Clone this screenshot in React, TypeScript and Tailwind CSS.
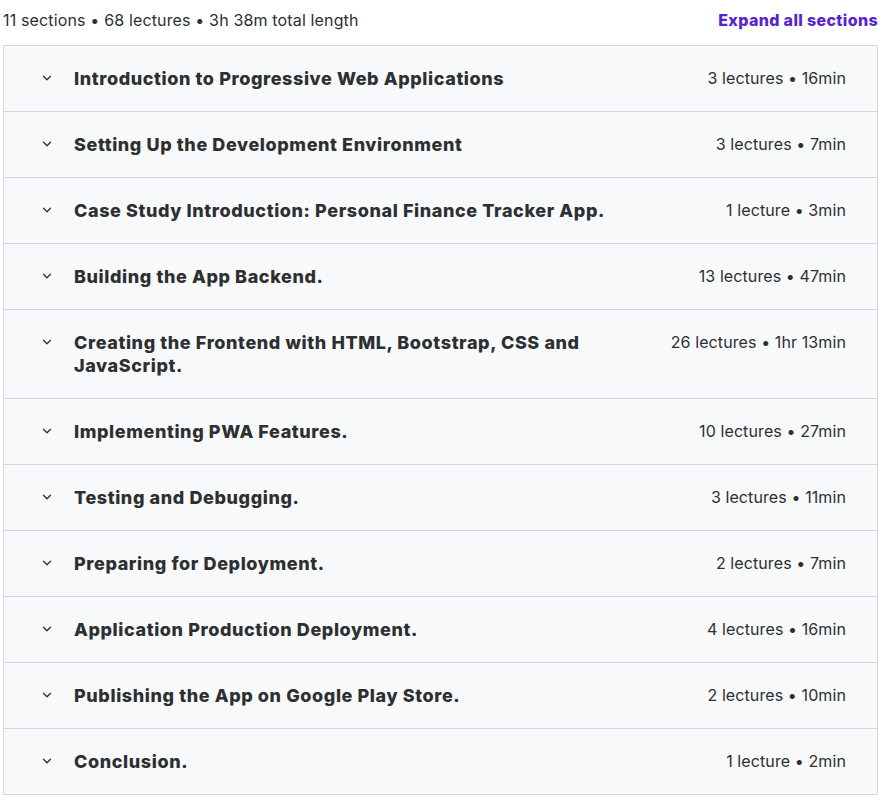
import React from "react";

const sections: [string, string][] = [
  ["Introduction to Progressive Web Applications", "3 lectures • 16min"],
  ["Setting Up the Development Environment", "3 lectures • 7min"],
  ["Case Study Introduction: Personal Finance Tracker App.", "1 lecture • 3min"],
  ["Building the App Backend.", "13 lectures • 47min"],
  ["Creating the Frontend with HTML, Bootstrap, CSS and JavaScript.", "26 lectures • 1hr 13min"],
  ["Implementing PWA Features.", "10 lectures • 27min"],
  ["Testing and Debugging.", "3 lectures • 11min"],
  ["Preparing for Deployment.", "2 lectures • 7min"],
  ["Application Production Deployment.", "4 lectures • 16min"],
  ["Publishing the App on Google Play Store.", "2 lectures • 10min"],
  ["Conclusion.", "1 lecture • 2min"],
];

function Chevron() {
  return (
    <svg width="14" height="14" viewBox="0 0 24 24" fill="none" stroke="#2d2f31" strokeWidth="2.2" strokeLinecap="round" strokeLinejoin="round">
      <path d="M6 9l6 6 6-6" />
    </svg>
  );
}

export default function App() {
  return (
    <div className="w-[880px] bg-white text-[#2d2f31]" style={{ fontFamily: "Inter, 'Noto Sans', sans-serif" }}>
      <div className="flex items-center justify-between pl-[3px] pr-[2px] h-[40px]">
        <span className="text-[16px] tracking-[0.15px]">11 sections • 68 lectures • 3h 38m total length</span>
        <span className="text-[16px] font-extrabold text-[#5624d0] tracking-[0.35px]">Expand all sections</span>
      </div>
      <div className="ml-[3px] mr-[2px] mt-[5px] border border-[#d1d7dc] bg-[#f7f9fa]">
        {sections.map(([title, meta], i) => (
          <div
            key={i}
            className={`flex items-start pl-[36px] pr-[31px] pt-[21px] pb-[22px] ${i < sections.length - 1 ? "border-b border-[#d1d7dc]" : ""}`}
          >
            <div className="w-[34px] h-[22px] flex items-center shrink-0">
              <Chevron />
            </div>
            <div className="flex-1 text-[18px] leading-[23px] -mb-[1px] font-extrabold pr-[40px] max-w-[590px] tracking-[0.6px]">{title}</div>
            <div className="ml-auto text-[16px] leading-[22px] whitespace-nowrap tracking-[0.1px]">{meta}</div>
          </div>
        ))}
      </div>
    </div>
  );
}
